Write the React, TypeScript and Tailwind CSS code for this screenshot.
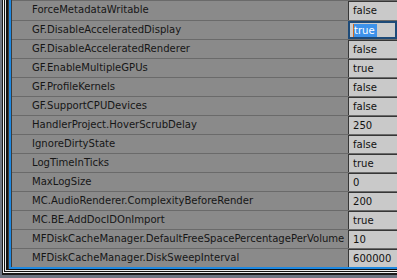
import React from "react";

const rows: [string, string][] = [
  ["ForceMetadataWritable", "false"],
  ["GF.DisableAcceleratedDisplay", "true"],
  ["GF.DisableAcceleratedRenderer", "false"],
  ["GF.EnableMultipleGPUs", "true"],
  ["GF.ProfileKernels", "false"],
  ["GF.SupportCPUDevices", "false"],
  ["HandlerProject.HoverScrubDelay", "250"],
  ["IgnoreDirtyState", "false"],
  ["LogTimeInTicks", "true"],
  ["MaxLogSize", "0"],
  ["MC.AudioRenderer.ComplexityBeforeRender", "200"],
  ["MC.BE.AddDocIDOnImport", "true"],
  ["MFDiskCacheManager.DefaultFreeSpacePercentagePerVolume", "10"],
  ["MFDiskCacheManager.DiskSweepInterval", "600000"],
];

export default function App() {
  return (
    <div
      className="w-[397px] h-[278px] overflow-hidden bg-[#5f6672]"
      style={{ fontFamily: '"DejaVu Sans Condensed", Tahoma, "Liberation Sans", sans-serif' }}
    >
      <div className="h-full border-l-2 border-b-[3px] border-[#6d7482]">
        <div className="h-full border-l border-b-2 border-[#1a1a1a]">
          <div className="h-full border-l border-b border-[#f2f2f2]">
            <div className="h-full border-l border-b border-[#111]">
              <div className="h-full border-l border-b border-[#e8e8e8]">
                <div className="h-full border-l-2 border-b border-[#111]">
                  <div className="h-full border-l border-[#3a3a3a]">
                    <div className="h-full border-l-2 border-b-2 border-[#1e88e0]">
                      <div className="h-full border-l border-[#3b3b3b] bg-[#8a8a8a] flex flex-col">
                        {rows.map(([k, v], i) => (
                          <div
                            key={k}
                            className={`flex border-t border-[#6a6a6a] ${i === 0 ? "h-[20px]" : "h-[19px]"}`}
                          >
                            <div className="w-[336px] shrink-0 pl-5 text-[11.2px] leading-[18px] text-[#161616] whitespace-nowrap overflow-hidden">
                              {k}
                            </div>
                            {i === 1 ? (
                              <div className="flex-1 border-2 border-[#1d4a78] bg-[#cbcbcb] pl-[3px] flex items-center text-[11.2px]">
                                <span className="w-px h-[13px] bg-[#d2691e]" />
                                <span className="bg-[#3d92ea] text-white leading-[13px] pr-[2px]">{v}</span>
                              </div>
                            ) : (
                              <div className="flex-1 border-l border-t border-[#363636] bg-[#c9c9c9] pl-[4px] text-[11.2px] leading-[17px] text-[#111]">
                                {v}
                              </div>
                            )}
                          </div>
                        ))}
                      </div>
                    </div>
                  </div>
                </div>
              </div>
            </div>
          </div>
        </div>
      </div>
    </div>
  );
}
